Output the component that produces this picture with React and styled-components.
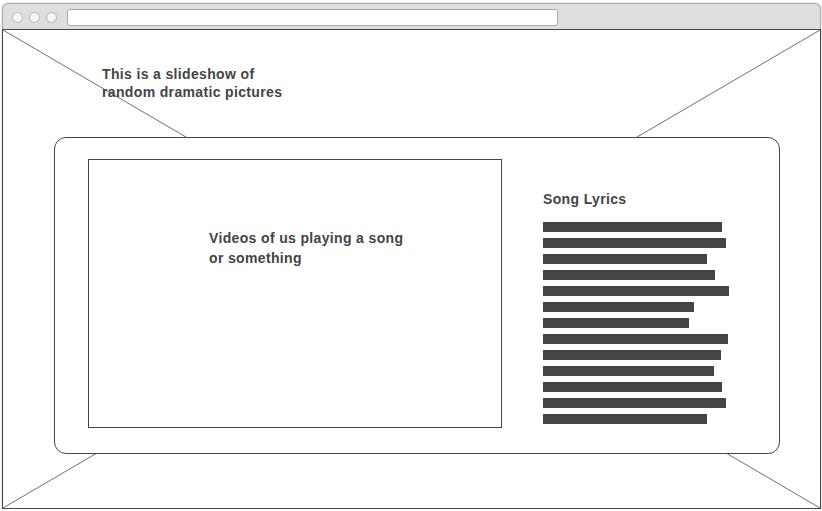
import React from 'react';
import styled, { createGlobalStyle } from 'styled-components';

const GlobalStyle = createGlobalStyle`
  * { box-sizing: border-box; }
  body {
    margin: 0;
    background: #ffffff;
    font-family: "Liberation Sans", Arial, sans-serif;
  }
`

// browser chrome
const Frame = styled.div`
  width: 819px;
  height: 506px;
  margin: 3px 0 0 2px;
  display: flex;
  flex-direction: column;
  box-shadow: 0 0 2px rgba(0, 0, 0, 0.25);
  border-radius: 6px 6px 0 0;
`

const TopBar = styled.div`
  display: flex;
  align-items: center;
  height: 26px;
  padding: 5px 0 3px 9px;
  background: #dedede;
  border: 1px solid #a9a9a9;
  border-bottom: none;
  border-radius: 6px 6px 0 0;
`

const Dot = styled.span`
  width: 11px;
  height: 11px;
  border-radius: 50%;
  background: #f5f5f5;
  border: 1px solid #b4b4b4;
  margin-right: 6px;
`

const UrlBar = styled.div`
  width: 491px;
  height: 17px;
  margin-left: 4px;
  background: #ffffff;
  border: 1px solid #aaaaaa;
  border-radius: 3px;
`

const Content = styled.div`
  position: relative;
  flex: 1;
  border: 1px solid #444444;
  padding: 35px 0 0 99px;
  background: #ffffff;
`

const Cross = styled.svg`
  position: absolute;
  top: 0;
  left: 0;
  width: 100%;
  height: 100%;
`

const Label = styled.p`
  position: relative;
  margin: 0;
  font-size: 14px;
  font-weight: bold;
  letter-spacing: 0.35px;
  line-height: ${({ lh }) => lh || 20}px;
  color: #444444;
`

const Card = styled.div`
  position: relative;
  display: flex;
  align-items: flex-start;
  width: 726px;
  height: 317px;
  margin: 36px 0 0 -48px;
  padding: 21px 0 25px 33px;
  background: #ffffff;
  border: 1px solid #444444;
  border-radius: 12px;
`

const VideoBox = styled.div`
  width: 414px;
  height: 269px;
  border: 1px solid #444444;
  padding: 68px 0 0 120px;
`

const LyricsColumn = styled.div`
  margin-left: 41px;
  padding-top: 30px;
`

const Bars = styled.div`
  display: flex;
  flex-direction: column;
  gap: 6px;
  margin-top: 13px;
`

const Bar = styled.div`
  height: 10px;
  background: #444444;
`

const lyricWidths = [179, 183, 164, 172, 186, 151, 146, 185, 178, 171, 179, 183, 164];

export default function App() {
    return (
        <>
            <GlobalStyle />
            <Frame>
                <TopBar>
                    <Dot />
                    <Dot />
                    <Dot />
                    <UrlBar />
                </TopBar>
                <Content>
                    <Cross>
                        <line x1="0" y1="0" x2="100%" y2="100%" stroke="#707070" strokeWidth="1" />
                        <line x1="100%" y1="0" x2="0" y2="100%" stroke="#707070" strokeWidth="1" />
                    </Cross>
                    <Label lh={18}>
                        This is a slideshow of<br />random dramatic pictures
                    </Label>
                    <Card>
                        <VideoBox>
                            <Label>
                                Videos of us playing a song<br />or something
                            </Label>
                        </VideoBox>
                        <LyricsColumn>
                            <Label>Song Lyrics</Label>
                            <Bars>
                                {lyricWidths.map((w, i) => (
                                    <Bar key={i} style={{ width: w }} />
                                ))}
                            </Bars>
                        </LyricsColumn>
                    </Card>
                </Content>
            </Frame>
        </>
    );
}
